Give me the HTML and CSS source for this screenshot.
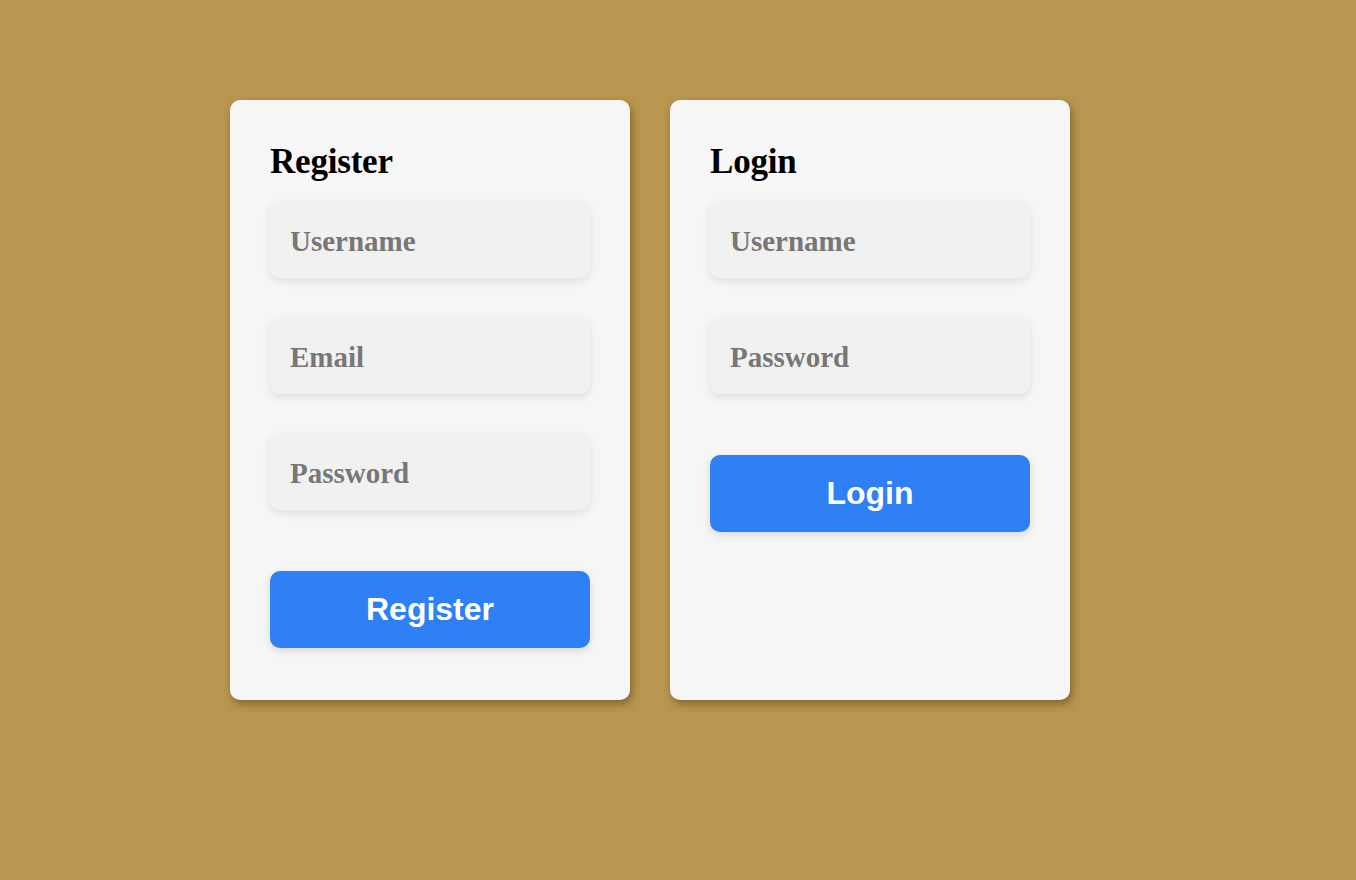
FILE: index.html
```html
<!DOCTYPE html>
<html lang="en">
<head>
<meta charset="utf-8">
<title>Register / Login</title>
<link rel="stylesheet" href="styles.css">
</head>
<body>
<main class="forms">
  <section class="card">
    <h2 class="card-title">Register</h2>
    <input class="field" type="text" placeholder="Username">
    <input class="field" type="email" placeholder="Email">
    <input class="field" type="password" placeholder="Password">
    <button class="btn" type="button">Register</button>
  </section>
  <section class="card">
    <h2 class="card-title">Login</h2>
    <input class="field" type="text" placeholder="Username">
    <input class="field" type="password" placeholder="Password">
    <button class="btn" type="button">Login</button>
  </section>
</main>
</body>
</html>
```

FILE: styles.css
```css
* { box-sizing: border-box; }
html, body { margin: 0; padding: 0; }
body {
  background: #b99750;
  min-height: 880px;
  font-family: "Liberation Serif", serif;
}
.forms {
  display: flex;
  gap: 40px;
  padding: 100px 0 0 230px;
}
.card {
  width: 400px;
  height: 600px;
  background: #f6f6f6;
  border-radius: 10px;
  padding: 40px;
  display: flex;
  flex-direction: column;
  box-shadow: 2px 4px 8px rgba(60, 40, 0, 0.45);
}
.card-title {
  margin: 2px 0 20px;
  font-family: "Liberation Serif", serif;
  font-weight: 700;
  font-size: 35px;
  line-height: 40px;
  color: #000;
  letter-spacing: -0.2px;
}
.field {
  display: block;
  width: 320px;
  height: 76px;
  margin: 0 0 40px;
  padding: 2px 20px 0;
  border: none;
  outline: none;
  border-radius: 10px;
  background: #f1f1f1;
  box-shadow: 0 3px 8px rgba(0, 0, 0, 0.1);
  font-family: "Liberation Serif", serif;
  font-weight: 700;
  font-size: 29px;
  color: #777;
}
.field::placeholder {
  color: #777;
  opacity: 1;
}
.btn {
  display: block;
  width: 320px;
  height: 77px;
  margin-top: 21px;
  border: none;
  border-radius: 10px;
  background: #2f7ff5;
  color: #fff;
  font-family: "Liberation Sans", Arial, sans-serif;
  font-weight: 700;
  font-size: 32px;
  box-shadow: 0 3px 8px rgba(0, 0, 0, 0.12);
  cursor: pointer;
}
```
